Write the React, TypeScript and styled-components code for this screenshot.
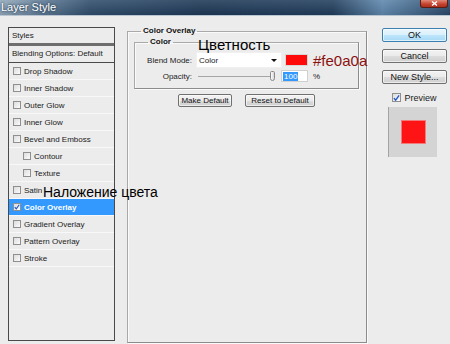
import React, { FunctionComponent } from "react"
import styled, { createGlobalStyle } from "styled-components"

const GlobalStyle = createGlobalStyle`
  *, *::before, *::after {
    box-sizing: border-box;
  }
  html, body {
    margin: 0;
    padding: 0;
  }
  body {
    width: 450px;
    height: 344px;
    overflow: hidden;
    background: #ececec;
    font-family: "Liberation Sans", Arial, sans-serif;
    color: #1a1a1a;
  }
`

const Window = styled.div`
  width: 450px;
  height: 344px;
  display: flex;
  flex-direction: column;
  background: #ececec;
`

const TitleBar = styled.div`
  flex: 0 0 16px;
  display: flex;
  align-items: flex-start;
  justify-content: space-between;
  padding: 0 2px 0 1px;
  border-bottom: 1px solid #b9c6d2;
  background: linear-gradient(180deg, rgba(255, 255, 255, 0.12), rgba(0, 0, 0, 0.08)),
    linear-gradient(
      90deg,
      #93a8ba 0%,
      #5f7b96 9%,
      #2f4c6b 20%,
      #1e3856 45%,
      #213d5c 74%,
      #5e87ad 85%,
      #4d7296 90%,
      #2a4869 100%
    );
`

const Title = styled.span`
  font-size: 11px;
  line-height: 15px;
  color: #fff;
  text-shadow: 0 0 3px #33495f, 0 0 2px #33495f;
`

const CloseButton = styled.span`
  width: 28px;
  height: 8px;
  display: flex;
  align-items: flex-start;
  justify-content: center;
  padding-top: 1px;
  border: 1px solid #5b1c12;
  border-top: none;
  border-radius: 0 0 3px 3px;
  background: linear-gradient(180deg, #e08a78, #c4402c 60%, #a8301f);
`

const Body = styled.div`
  flex: 1;
  display: flex;
  align-items: flex-start;
  padding: 10px 3px 0 8px;
`

/* left list of styles */

const StylesPanel = styled.div`
  margin-top: 1px;
  width: 107px;
  height: 314px;
  flex: 0 0 auto;
  display: flex;
  flex-direction: column;
  border: 1px solid #4a4a4a;
  background: #ececec;
`

const StylesHeader = styled.div`
  height: 18px;
  padding-left: 3px;
  font-size: 8px;
  line-height: 15px;
  border-bottom: 3px solid #6e6e6e;
`

const BlendRow = styled.div`
  height: 17px;
  padding-left: 3px;
  font-size: 8px;
  line-height: 16px;
  border-bottom: 1px solid #4a4a4a;
`

const StyleRow = styled.div<{ $indent?: boolean; $active?: boolean }>`
  position: relative;
  height: 17px;
  display: flex;
  align-items: center;
  gap: 3px;
  padding-left: ${({ $indent }) => ($indent ? 14 : 4)}px;
  font-size: 8px;
  white-space: nowrap;
  border-bottom: 1px solid #f8f8f8;
  background: ${({ $active }) => ($active ? "#3399ff" : "transparent")};
  color: ${({ $active }) => ($active ? "#fff" : "#1a1a1a")};
  font-weight: ${({ $active }) => ($active ? 700 : 400)};
`

const Box = styled.span<{ $size?: number }>`
  width: ${({ $size = 8 }) => $size}px;
  height: ${({ $size = 8 }) => $size}px;
  flex: 0 0 auto;
  display: flex;
  align-items: center;
  justify-content: center;
  border: 1px solid #8f8f8f;
  background: linear-gradient(135deg, #dcdcdc, #fbfbfb);
`

const Note = styled.span<{ $size: number; $color: string }>`
  font-family: "Liberation Sans", Arial, sans-serif;
  font-size: ${({ $size }) => $size}px;
  line-height: ${({ $size }) => $size}px;
  font-weight: 400;
  color: ${({ $color }) => $color};
  white-space: nowrap;
`

const SatinNote = styled(Note)`
  position: absolute;
  left: 34px;
  top: 3px;
  z-index: 2;
`

/* middle panel */

const Group = styled.fieldset`
  margin: 0;
  min-width: 0;
  border: 1px solid #a9a9a9;
  border-right-color: #8c8c8c;
  border-bottom-color: #8c8c8c;
  box-shadow: inset 1px 1px 0 #fafafa, 1px 1px 0 #fafafa;
`

const MainGroup = styled(Group)`
  margin-left: 12px;
  width: 240px;
  height: 317px;
  flex: 0 0 auto;
  padding: 0 7px 0 6px;
`

const ColorGroup = styled(Group)`
  margin-top: 1px;
  padding: 5px 0 6px;
`

const Legend = styled.legend<{ $offset: number }>`
  margin-left: ${({ $offset }) => $offset}px;
  padding: 0 2px;
  font-size: 8px;
  line-height: 10px;
  font-weight: 700;
  color: #111;
`

const FieldRow = styled.div<{ $height: number }>`
  position: relative;
  height: ${({ $height }) => $height}px;
  display: flex;
  align-items: center;
  & + & {
    margin-top: 2px;
  }
  > * {
    flex-shrink: 0;
  }
`

const FieldLabel = styled.span`
  width: 58px;
  margin-right: 3px;
  padding-right: 1px;
  text-align: right;
  font-size: 8px;
  color: #222;
`

const Select = styled.div`
  width: 86px;
  height: 16px;
  display: flex;
  align-items: center;
  justify-content: space-between;
  padding: 0 4px 0 2px;
  font-size: 8px;
  background: #fff;
  border: 1px solid #f0f0f0;
`

const Arrow = styled.span`
  width: 0;
  height: 0;
  border-left: 3px solid transparent;
  border-right: 3px solid transparent;
  border-top: 3px solid #111;
`

const Swatch = styled.span`
  width: 23px;
  height: 12px;
  margin-left: 3px;
  background: #fe0a0a;
  border: 1px solid #d8d8d8;
`

const ColorNote = styled(Note)`
  position: absolute;
  left: 63px;
  top: -15px;
`

const Slider = styled.div`
  position: relative;
  width: 83px;
  height: 12px;
  &::before {
    content: "";
    position: absolute;
    left: 2px;
    right: 8px;
    top: 6px;
    height: 1px;
    background: #a6a6a6;
  }
`

const Thumb = styled.span`
  position: absolute;
  left: 74px;
  top: 1px;
  width: 5px;
  height: 10px;
  border: 1px solid #8a8a8a;
  border-radius: 2px 2px 3px 3px;
  background: linear-gradient(90deg, #fdfdfd, #d6d6d6);
`

const NumberInput = styled.div`
  width: 27px;
  height: 12px;
  margin-left: 2px;
  padding: 1px 0 0 1px;
  font-size: 8px;
  line-height: 9px;
  background: #fff;
  border: 1px solid #d0d0d0;
`

const Selected = styled.span`
  display: inline-block;
  padding: 0 1px;
  background: #3399ff;
  color: #fff;
`

const Percent = styled.span`
  margin-left: 5px;
  font-size: 8px;
`

const ButtonRow = styled.div`
  margin-top: 5px;
  display: flex;
  justify-content: center;
  gap: 13px;
`

const Button = styled.button<{ $width?: number; $primary?: boolean; $size?: number }>`
  width: ${({ $width }) => ($width ? `${$width}px` : "100%")};
  height: ${({ $size = 9 }) => ($size > 8 ? 14 : 13)}px;
  margin: 0;
  padding: 0;
  font-family: "Liberation Sans", Arial, sans-serif;
  font-size: ${({ $size = 9 }) => $size}px;
  line-height: 1;
  color: #111;
  border: 1px solid ${({ $primary }) => ($primary ? "#3c7fb1" : "#707070")};
  border-radius: 2px;
  background: ${({ $primary }) =>
    $primary
      ? "linear-gradient(180deg, #eaf6fd 0%, #d9f0fc 50%, #bee6fd 50%, #a7d9f5 100%)"
      : "linear-gradient(180deg, #f2f2f2 0%, #ebebeb 50%, #dddddd 50%, #cfcfcf 100%)"};
  box-shadow: inset 0 0 0 1px rgba(255, 255, 255, 0.6);
`

/* right column */

const Side = styled.div`
  margin: 2px 0 0 15px;
  width: 65px;
  flex: 0 0 auto;
  display: flex;
  flex-direction: column;
  gap: 7px;
`

const PreviewToggle = styled.label`
  margin-top: 1px;
  height: 11px;
  display: flex;
  align-items: center;
  justify-content: center;
  gap: 3px;
  font-size: 9px;
`

const PreviewBox = styled.div`
  margin: -3px 0 0 6px;
  width: 49px;
  height: 50px;
  display: flex;
  align-items: center;
  justify-content: center;
  background: #d4d4d4;
  border-left: 1px solid #a3a3a3;
`

const PreviewSwatch = styled.span`
  width: 25px;
  height: 24px;
  background: #fe1414;
  border: 1px solid #f27a7a;
`

const Check: FunctionComponent<{ color: string }> = ({ color }) => (
  <svg width="8" height="8" viewBox="0 0 8 8">
    <path d="M1 4.2 L3 6.5 L7 1" fill="none" stroke={color} strokeWidth="1.5" />
  </svg>
)

type StyleItem = { name: string; indent?: boolean; active?: boolean }

const items: StyleItem[] = [
  { name: "Drop Shadow" },
  { name: "Inner Shadow" },
  { name: "Outer Glow" },
  { name: "Inner Glow" },
  { name: "Bevel and Emboss" },
  { name: "Contour", indent: true },
  { name: "Texture", indent: true },
  { name: "Satin" },
  { name: "Color Overlay", active: true },
  { name: "Gradient Overlay" },
  { name: "Pattern Overlay" },
  { name: "Stroke" },
]

const App: FunctionComponent = () => {
  return (
    <Window>
      <GlobalStyle />
      <TitleBar>
        <Title>Layer Style</Title>
        <CloseButton>
          <svg width="7" height="5" viewBox="0 0 7 5">
            <path d="M1 0.5 L6 4.5 M6 0.5 L1 4.5" stroke="#fff" strokeWidth="1.4" />
          </svg>
        </CloseButton>
      </TitleBar>

      <Body>
        <StylesPanel>
          <StylesHeader>Styles</StylesHeader>
          <BlendRow>Blending Options: Default</BlendRow>
          {items.map((item) => (
            <StyleRow key={item.name} $indent={item.indent} $active={item.active}>
              <Box>{item.active && <Check color="#1d55c8" />}</Box>
              {item.name}
              {item.name === "Satin" && (
                <SatinNote $size={14} $color="#000">
                  Наложение цвета
                </SatinNote>
              )}
            </StyleRow>
          ))}
        </StylesPanel>

        <MainGroup>
          <Legend $offset={7}>Color Overlay</Legend>
          <ColorGroup>
            <Legend $offset={13}>Color</Legend>
            <FieldRow $height={16}>
              <FieldLabel>Blend Mode:</FieldLabel>
              <Select>
                Color
                <Arrow />
              </Select>
              <Swatch />
              <Note $size={15} $color="#8b1111" style={{ marginLeft: 5 }}>
                #fe0a0a
              </Note>
              <ColorNote $size={15} $color="#000">
                Цветность
              </ColorNote>
            </FieldRow>
            <FieldRow $height={12}>
              <FieldLabel>Opacity:</FieldLabel>
              <Slider>
                <Thumb />
              </Slider>
              <NumberInput>
                <Selected>100</Selected>
              </NumberInput>
              <Percent>%</Percent>
            </FieldRow>
          </ColorGroup>
          <ButtonRow>
            <Button $width={54} $size={8}>
              Make Default
            </Button>
            <Button $width={70} $size={8}>
              Reset to Default
            </Button>
          </ButtonRow>
        </MainGroup>

        <Side>
          <Button $primary>OK</Button>
          <Button>Cancel</Button>
          <Button>New Style...</Button>
          <PreviewToggle>
            <Box $size={9}>
              <Check color="#1d55c8" />
            </Box>
            Preview
          </PreviewToggle>
          <PreviewBox>
            <PreviewSwatch />
          </PreviewBox>
        </Side>
      </Body>
    </Window>
  )
}

export default App
